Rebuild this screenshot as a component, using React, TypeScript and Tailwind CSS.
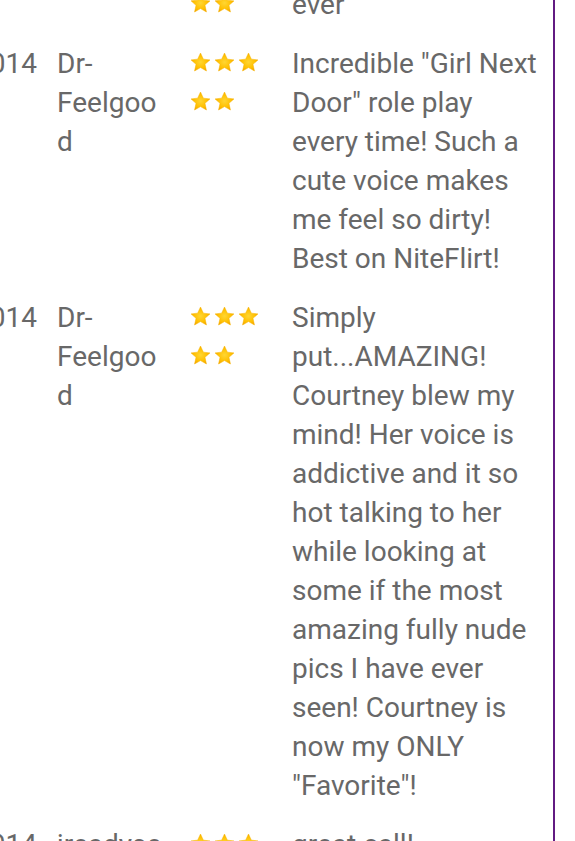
const REVIEWS = [
  {
    date: "2014",
    user: "mike22",
    rating: 5,
    comment: "Best phone fantasy ever",
  },
  {
    date: "2014",
    user: "Dr-Feelgood",
    rating: 5,
    comment:
      'Incredible "Girl Next Door" role play every time! Such a cute voice makes me feel so dirty! Best on NiteFlirt!',
  },
  {
    date: "2014",
    user: "Dr-Feelgood",
    rating: 5,
    comment:
      'Simply put...AMAZING! Courtney blew my mind! Her voice is addictive and it so hot talking to her while looking at some if the most amazing fully nude pics I have ever seen! Courtney is now my ONLY "Favorite"!',
  },
  {
    date: "2014",
    user: "jreadysex",
    rating: 5,
    comment: "great call!",
  },
];

function Star() {
  return (
    <span className="flex h-[39px] w-[24px] items-center">
      <svg viewBox="0 0 24 24" className="-mt-[3px] h-[21px] w-[21px]">
        <defs>
          <radialGradient id="starFill" cx="50%" cy="50%" r="55%">
            <stop offset="0%" stopColor="#ffd633" />
            <stop offset="65%" stopColor="#ffbf00" />
            <stop offset="100%" stopColor="#f29d00" />
          </radialGradient>
        </defs>
        <path
          d="M12 1.2l3.3 7 7.5.8-5.7 5.1 1.7 7.6L12 17.8l-6.8 3.9 1.7-7.6-5.7-5.1 7.5-.8z"
          fill="url(#starFill)"
          stroke="#f7b500"
          strokeWidth="0.6"
          strokeLinejoin="round"
        />
      </svg>
    </span>
  );
}

export default function App() {
  return (
    <div className="h-[841px] overflow-hidden bg-white font-['Roboto',sans-serif] text-[28px] leading-[39px] text-[#686868]">
      <div className="-mt-[64px] ml-[-26px] w-[581px] border-r-2 border-[#621b82]">
        {REVIEWS.map((review, index) => (
          <div key={index} className="flex py-[10px]">
            <div className="w-[83px] shrink-0 whitespace-nowrap">
              {review.date}
            </div>
            <div className="w-[133px] shrink-0 pr-[22px] break-words">
              {review.user}
            </div>
            <div className="flex w-[102px] shrink-0 flex-wrap content-start pr-[30px]">
              {Array.from({ length: review.rating }).map((_, i) => (
                <Star key={i} />
              ))}
            </div>
            <div className="w-[261px] shrink-0 pr-[9px]">{review.comment}</div>
          </div>
        ))}
      </div>
    </div>
  );
}
